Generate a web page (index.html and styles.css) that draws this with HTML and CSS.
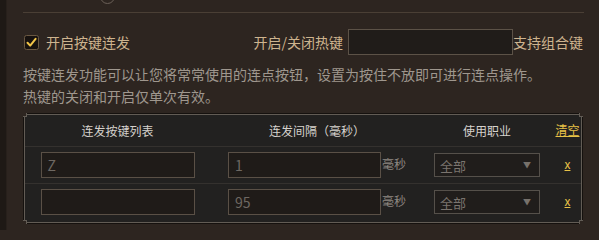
FILE: index.html
```html
<!DOCTYPE html>
<html lang="zh-CN">
<head>
<meta charset="utf-8">
<title>按键连发</title>
<link rel="stylesheet" href="styles.css">
</head>
<body>
<div class="page">
  <div class="edge"></div>
  <div class="panel">
    <div class="peek">
      <span class="radio"></span>
    </div>
    <div class="rule"></div>

    <div class="options">
      <label class="check">
        <span class="box">
          <svg width="15" height="15" viewBox="0 0 15 15"><rect x="0.5" y="0.5" width="14" height="14" rx="2" fill="#17120f" stroke="#6a5842"/><path d="M3.5 7.8 L6.2 10.6 L11.6 3.8" fill="none" stroke="#f2c548" stroke-width="2" stroke-linecap="round" stroke-linejoin="round"/></svg>
        </span>
        <span class="check-label">开启按键连发</span>
      </label>
      <div class="hotkey">
        <span class="hotkey-label">开启/关闭热键</span>
        <span class="field hotkey-field"></span>
        <span class="hotkey-note">支持组合键</span>
      </div>
    </div>

    <p class="desc">按键连发功能可以让您将常常使用的连点按钮，设置为按住不放即可进行连点操作。<br>热键的关闭和开启仅单次有效。</p>

    <div class="table">
      <span class="notch tl"></span><span class="notch tr"></span><span class="notch bl"></span><span class="notch br"></span>
      <div class="row head">
        <div class="cell c1">连发按键列表</div>
        <div class="cell c2h">连发间隔（毫秒）</div>
        <div class="cell c3">使用职业</div>
        <div class="cell c4"><a class="link">清空</a></div>
      </div>
      <div class="row">
        <div class="cell c1"><span class="field key-field">Z</span></div>
        <div class="cell c2"><span class="field ms-field">1</span><span class="unit">毫秒</span></div>
        <div class="cell c3"><span class="select"><span>全部</span><span class="arrow">▼</span></span></div>
        <div class="cell c4"><a class="link x">x</a></div>
      </div>
      <div class="row">
        <div class="cell c1"><span class="field key-field"></span></div>
        <div class="cell c2"><span class="field ms-field">95</span><span class="unit">毫秒</span></div>
        <div class="cell c3"><span class="select"><span>全部</span><span class="arrow">▼</span></span></div>
        <div class="cell c4"><a class="link x">x</a></div>
      </div>
    </div>
  </div>
</div>
</body>
</html>
```
FILE: styles.css
```css
* { box-sizing: border-box; }
html, body {
  margin: 0;
  padding: 0;
  width: 599px;
  height: 230px;
  overflow: hidden;
  background: #2d2520;
  font-family: "Noto Sans CJK SC", "Noto Sans", sans-serif;
}
.page {
  display: flex;
  height: 230px;
}
.edge {
  width: 7px;
  flex: none;
  background: #1e1915;
  border-right: 1px solid #27201b;
}
.panel {
  flex: 1;
  padding: 0 8px 0 16px;
  background: #2d2520;
}
.peek {
  height: 12px;
  overflow: hidden;
  position: relative;
}
.radio {
  position: absolute;
  left: 77px;
  top: -11px;
  width: 15px;
  height: 15px;
  border-radius: 50%;
  border: 1px solid #6b6058;
}
.rule {
  height: 1px;
  background: #4a3f35;
  width: 561px;
}
.options {
  display: flex;
  align-items: center;
  height: 26px;
  margin-top: 16px;
  width: 560px;
}
.check {
  display: flex;
  align-items: center;
  gap: 7px;
  margin-left: 1px;
}
.box { display: flex; width: 15px; height: 15px; }
.check-label {
  font-size: 14px;
  color: #cdb48f;
  line-height: 20px;
}
.hotkey {
  margin-left: auto;
  display: flex;
  align-items: center;
}
.hotkey-label, .hotkey-note {
  font-size: 14px;
  color: #cdb48f;
  line-height: 20px;
}
.hotkey-label { margin-right: 5px; }
.field {
  display: inline-flex;
  align-items: center;
  background: #1f1b18;
  border: 1px solid #5a5046;
  height: 26px;
  padding-left: 6px;
  font-size: 14px;
  color: #6e6862;
}
.hotkey-field {
  width: 165px;
  background: #201c19;
  border-color: #5c5247;
}
.desc {
  margin: 8px 0 0 0;
  font-size: 14px;
  line-height: 22px;
  color: #9f978e;
}
.table {
  position: relative;
  margin: 7px 0 0 1px;
  width: 558px;
  height: 109px;
  background: #222120;
  border: 1px solid #625c55;
  box-shadow: 0 0 0 1px #15110e;
}
.notch {
  position: absolute;
  width: 4px;
  height: 4px;
  background: #2d2520;
}
.notch.tl { left: -2px; top: -2px; border-right: 1px solid #625c55; border-bottom: 1px solid #625c55; }
.notch.tr { right: -2px; top: -2px; border-left: 1px solid #625c55; border-bottom: 1px solid #625c55; }
.notch.bl { left: -2px; bottom: -2px; border-right: 1px solid #625c55; border-top: 1px solid #625c55; }
.notch.br { right: -2px; bottom: -2px; border-left: 1px solid #625c55; border-top: 1px solid #625c55; }
.row {
  display: grid;
  grid-template-columns: 185px 210px 134px 1fr;
  height: 37px;
  border-top: 1px solid #34312e;
  align-items: center;
}
.row.head {
  height: 31px;
  border-top: none;
}
.head .cell {
  font-size: 12px;
  color: #d6d2cd;
  text-align: center;
  padding-bottom: 1px;
}
.cell.c1 { display: flex; justify-content: center; }
.cell.c2 { display: flex; align-items: center; padding-left: 18px; }
.cell.c3 { display: flex; justify-content: center; }
.cell.c4 { display: flex; justify-content: center; }
.head .c2h { text-align: center; padding-left: 4px; }
.key-field { width: 154px; }
.ms-field { width: 153px; }
.unit {
  font-size: 12px;
  color: #8d8780;
  margin-left: 1px;
  margin-top: -4px;
}
.select {
  display: flex;
  align-items: center;
  justify-content: space-between;
  width: 106px;
  height: 24px;
  border: 1px solid #55504a;
  background: #201d1b;
  padding: 0 8px 0 5px;
  font-size: 13px;
  color: #7a746e;
}
.arrow {
  font-size: 8px;
  color: #77716b;
  margin-top: -2px;
}
.link {
  color: #e7c247;
  text-decoration: underline;
  font-size: 12px;
  line-height: 16px;
}
.link.x {
  font-size: 12px;
  margin-top: -2px;
}
```
